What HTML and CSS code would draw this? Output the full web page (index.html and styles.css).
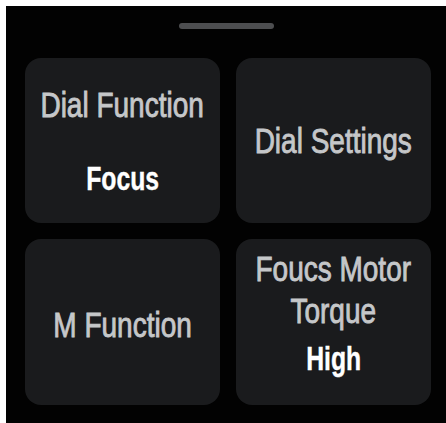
FILE: index.html
```html
<!DOCTYPE html>
<html>
<head>
<meta charset="utf-8">
<link rel="stylesheet" href="styles.css">
</head>
<body>
<div class="screen">
  <div class="handle"></div>
  <div class="grid">
    <div class="card card--split">
      <div class="label"><span class="narrow">Dial Function</span></div>
      <div class="value"><span class="narrow">Focus</span></div>
    </div>
    <div class="card">
      <div class="label"><span class="narrow">Dial Settings</span></div>
    </div>
    <div class="card card--low">
      <div class="label"><span class="narrow">M Function</span></div>
    </div>
    <div class="card card--tall">
      <div class="label"><span class="narrow">Foucs Motor<br>Torque</span></div>
      <div class="value"><span class="narrow">High</span></div>
    </div>
  </div>
</div>
</body>
</html>
```
FILE: styles.css
```css
html, body {
  margin: 0;
  padding: 0;
  background: #ffffff;
}
body {
  font-family: "Liberation Sans", Arial, sans-serif;
}
.screen {
  margin: 6px 0 0 6px;
  width: 440px;
  height: 417px;
  background: #020202;
  display: flex;
  flex-direction: column;
  align-items: center;
}
.handle {
  margin-top: 17px;
  width: 95px;
  height: 6px;
  border-radius: 3px;
  background: #4d4e50;
}
.grid {
  align-self: flex-start;
  margin: 29px 0 0 19px;
  display: grid;
  grid-template-columns: 195px 195px;
  grid-template-rows: 165px 166px;
  column-gap: 16px;
  row-gap: 16px;
}
.card {
  background: #1a1b1d;
  border-radius: 16px;
  display: flex;
  flex-direction: column;
  align-items: center;
  justify-content: center;
  text-align: center;
}
.narrow {
  display: inline-block;
  white-space: nowrap;
  transform: scaleX(0.8);
}
.label {
  color: #c5c7c9;
  font-size: 35px;
  line-height: 42px;
  -webkit-text-stroke: 0.9px #c5c7c9;
}
.value {
  color: #ffffff;
  font-size: 33px;
  line-height: 36px;
  font-weight: bold;
  -webkit-text-stroke: 0.4px #ffffff;
}
.value .narrow {
  transform: scaleX(0.75);
}
.card--split {
  gap: 35px;
}
.card--low {
  padding-top: 6px;
}
.card--tall {
  gap: 9px;
  padding-bottom: 20px;
}
```
